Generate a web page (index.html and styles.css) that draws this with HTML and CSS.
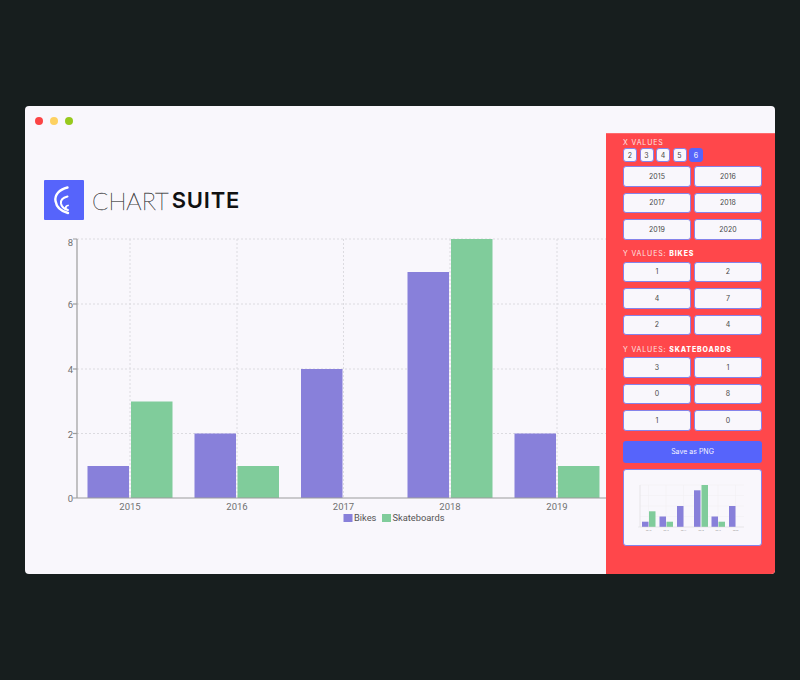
FILE: index.html
```html
<!DOCTYPE html>
<html lang="en">
<head>
    <meta charset="UTF-8">
    <meta name="viewport" content="width=device-width, initial-scale=1.0">
    <title>Chart Suite</title>
    <link rel="stylesheet" href="styles.css">
</head>
<body>
    <div class="window">
        <div class="titlebar">
            <span class="dot dot-red"></span>
            <span class="dot dot-yellow"></span>
            <span class="dot dot-green"></span>
        </div>
        <div class="main">
            <div class="content">
                <div class="logo">
                    <svg class="logo-icon" viewBox="0 0 40 40">
                        <rect width="40" height="40" rx="1" fill="#5664fb"/>
                        <g fill="none" stroke="#fff" stroke-linecap="round">
                            <path stroke-width="2.4" d="M23.5 7.5C15 9.5 10.5 15 11.5 21C12.5 27.5 18 31.5 24 33"/>
                            <path stroke-width="2" d="M23.5 16.500C19 17.500 16.500 20 17 23.500C17.500 26.500 20 29 24 30"/>
                            <path stroke-width="1.800" d="M24 25.500C22 26 21.500 27 22 28"/>
                        </g>
                    </svg>
                    <div class="logo-text"><span class="logo-light">CHART</span><span class="logo-bold">SUITE</span></div>
                </div>
                <svg class="chart" width="581" height="300" viewBox="25 230 581 300">
                    <g class="grid">
                        <line x1="77" y1="239" x2="606" y2="239"/>
                        <line x1="77" y1="304" x2="606" y2="304"/>
                        <line x1="77" y1="369" x2="606" y2="369"/>
                        <line x1="77" y1="433.500" x2="606" y2="433.500"/>
                        <line x1="130" y1="239" x2="130" y2="498"/>
                        <line x1="237" y1="239" x2="237" y2="498"/>
                        <line x1="343.500" y1="239" x2="343.500" y2="498"/>
                        <line x1="450" y1="239" x2="450" y2="498"/>
                        <line x1="557" y1="239" x2="557" y2="498"/>
                    </g>
                    <g class="bars-a">
                        <rect x="87.500" y="466" width="41.500" height="32"/>
                        <rect x="194.500" y="433.500" width="41.500" height="64.500"/>
                        <rect x="301" y="369" width="41.500" height="129"/>
                        <rect x="407.500" y="272" width="41.500" height="226"/>
                        <rect x="514.500" y="433.500" width="41.500" height="64.500"/>
                    </g>
                    <g class="bars-b">
                        <rect x="131" y="401.500" width="41.500" height="96.500"/>
                        <rect x="237.500" y="466" width="41.500" height="32"/>
                        <rect x="451" y="239" width="41.500" height="259"/>
                        <rect x="558" y="466" width="41.500" height="32"/>
                    </g>
                    <g class="axis">
                        <line x1="77" y1="239" x2="77" y2="498"/>
                        <line x1="73" y1="498" x2="606" y2="498"/>
                        <line x1="73" y1="239" x2="77" y2="239"/>
                        <line x1="73" y1="304" x2="77" y2="304"/>
                        <line x1="73" y1="369" x2="77" y2="369"/>
                        <line x1="73" y1="433.500" x2="77" y2="433.500"/>
                    </g>
                    <g class="labels-y">
                        <text x="73" y="245.500">8</text>
                        <text x="73" y="307.500">6</text>
                        <text x="73" y="372.500">4</text>
                        <text x="73" y="437.500">2</text>
                        <text x="73" y="501.500">0</text>
                    </g>
                    <g class="labels-x">
                        <text x="130" y="509.500">2015</text>
                        <text x="237" y="509.500">2016</text>
                        <text x="343.500" y="509.500">2017</text>
                        <text x="450" y="509.500">2018</text>
                        <text x="557" y="509.500">2019</text>
                    </g>
                    <rect class="swatch-a" x="343.500" y="514" width="9" height="8"/>
                    <text class="legend" x="354" y="521">Bikes</text>
                    <rect class="swatch-b" x="382" y="514" width="9" height="8"/>
                    <text class="legend" x="392.500" y="521">Skateboards</text>
                </svg>
            </div>
            <div class="sidebar">
                <div class="label">X VALUES</div>
                <div class="counts">
                    <button class="count">2</button>
                    <button class="count">3</button>
                    <button class="count">4</button>
                    <button class="count">5</button>
                    <button class="count active">6</button>
                </div>
                <div class="values">
                    <button>2015</button><button>2016</button>
                    <button>2017</button><button>2018</button>
                    <button>2019</button><button>2020</button>
                </div>
                <div class="label label-y">Y VALUES: <b>BIKES</b></div>
                <div class="values">
                    <button>1</button><button>2</button>
                    <button>4</button><button>7</button>
                    <button>2</button><button>4</button>
                </div>
                <div class="label label-y">Y VALUES: <b>SKATEBOARDS</b></div>
                <div class="values">
                    <button>3</button><button>1</button>
                    <button>0</button><button>8</button>
                    <button>1</button><button>0</button>
                </div>
                <button class="save">Save as PNG</button>
                <div class="preview">
                    <svg width="137" height="75" viewBox="624 470 137 75">
                        <g class="mini-grid">
                            <line x1="640" y1="485" x2="744" y2="485"/>
                            <line x1="640" y1="495.500" x2="744" y2="495.500"/>
                            <line x1="640" y1="506" x2="744" y2="506"/>
                            <line x1="640" y1="516.500" x2="744" y2="516.500"/>
                            <line x1="640" y1="527" x2="744" y2="527"/>
                            <line x1="640" y1="485" x2="640" y2="527"/>
                            <line x1="648.500" y1="485" x2="648.500" y2="527"/>
                            <line x1="666" y1="485" x2="666" y2="527"/>
                            <line x1="683.500" y1="485" x2="683.500" y2="527"/>
                            <line x1="701" y1="485" x2="701" y2="527"/>
                            <line x1="718" y1="485" x2="718" y2="527"/>
                            <line x1="735.500" y1="485" x2="735.500" y2="527"/>
                        </g>
                        <g class="bars-a">
                            <rect x="642" y="521.700" width="6.500" height="5.300"/>
                            <rect x="659.500" y="516.500" width="6.500" height="10.500"/>
                            <rect x="677" y="506" width="6.500" height="21"/>
                            <rect x="694" y="490.300" width="6.500" height="36.700"/>
                            <rect x="711.500" y="516.500" width="6.500" height="10.500"/>
                            <rect x="729" y="506" width="6.500" height="21"/>
                        </g>
                        <g class="bars-b">
                            <rect x="649" y="511.300" width="6.500" height="15.700"/>
                            <rect x="666.500" y="521.700" width="6.500" height="5.300"/>
                            <rect x="701.500" y="485" width="6.500" height="42"/>
                            <rect x="718.500" y="521.700" width="6.500" height="5.300"/>
                        </g>
                        <g class="mini-axis">
                            <line x1="638" y1="527" x2="744" y2="527"/>
                            <line x1="640" y1="485" x2="640" y2="527"/>
                        </g>
                        <g class="mini-labels">
                            <text x="648.500" y="531">2015</text>
                            <text x="666" y="531">2016</text>
                            <text x="683.500" y="531">2017</text>
                            <text x="701" y="531">2018</text>
                            <text x="718" y="531">2019</text>
                            <text x="735.500" y="531">2020</text>
                        </g>
                    </svg>
                </div>
            </div>
        </div>
    </div>
</body>
</html>
```

FILE: styles.css
```css
body {
    margin: 0;
    background-color: #171e1e;
    font-family: Roboto, sans-serif;
    height: 680px;
    overflow: hidden;
}

.window {
    width: 750px;
    height: 468px;
    margin: 106px 0 0 25px;
    background-color: #f9f7fc;
    border-radius: 4px;
    overflow: hidden;
}

.titlebar {
    height: 27px;
    display: flex;
    align-items: center;
    gap: 7px;
    padding: 3px 0 0 10px;
    box-sizing: border-box;
}

.dot {
    width: 8px;
    height: 8px;
    border-radius: 50%;
}

.dot-red { background-color: #fb4444; }
.dot-yellow { background-color: #fdd161; }
.dot-green { background-color: #97c91d; }

.main {
    display: flex;
    height: 441px;
}

.content {
    flex: 1;
    min-width: 0;
    padding-top: 47px;
}

.logo {
    display: flex;
    align-items: center;
    gap: 8px;
    margin-left: 19px;
    height: 40px;
}

.logo-icon {
    width: 40px;
    height: 40px;
}

.logo-text {
    font-family: Lato, sans-serif;
    font-size: 24px;
    line-height: 1;
    color: #111;
    display: flex;
    gap: 3px;
    padding-top: 1px;
}

.logo-light {
    font-weight: 100;
    color: #000;
    -webkit-text-stroke: 0.3px #444;
}

.logo-bold {
    font-family: Inter, sans-serif;
    font-weight: 600;
    letter-spacing: 0.8px;
    font-size: 22px;
}

.chart {
    display: block;
    margin-top: 10px;
}

.grid line {
    stroke: #dcdbe0;
    stroke-width: 1;
    stroke-dasharray: 2 2;
}

.bars-a rect,
.swatch-a {
    fill: #8880da;
}

.bars-b rect,
.swatch-b {
    fill: #80cc9b;
}

.axis line {
    stroke: #9c9c9c;
    stroke-width: 1.2;
}

.labels-y text,
.labels-x text,
.legend {
    font-family: Roboto, sans-serif;
    font-size: 9.500px;
    fill: #707070;
}

.labels-y text {
    text-anchor: end;
}

.labels-x text {
    text-anchor: middle;
}

.legend {
    font-size: 9.300px;
    fill: #555;
}

.sidebar {
    width: 169px;
    box-sizing: border-box;
    padding: 4px 13px 0 17px;
    background-color: #ff474b;
    border-top: 1px solid #ff6a6c;
}

.label {
    font-family: Inter, sans-serif;
    font-size: 7px;
    line-height: 9px;
    letter-spacing: 0.850px;
    color: #fde3e3;
}

.label b {
    font-weight: 800;
    color: #fff;
}

.label-y {
    margin-top: 9.500px;
    margin-bottom: 3.500px;
}

.counts {
    display: flex;
    gap: 2.500px;
    margin-top: 1px;
    margin-bottom: 4px;
}

button {
    font-family: Inter, sans-serif;
    font-size: 7px;
    color: #484848;
    background-color: #f9f7fc;
    border: 1px solid #8583ea;
    border-radius: 3px;
    padding: 0;
}

.count {
    width: 14px;
    height: 14px;
}

.count.active {
    background-color: #5664fb;
    border-color: #5664fb;
    color: #fff;
}

.values {
    display: grid;
    grid-template-columns: 68px 68px;
    grid-auto-rows: 20.500px;
    column-gap: 3px;
    row-gap: 6px;
}

.save {
    display: block;
    width: 139px;
    height: 22px;
    margin-top: 10px;
    background-color: #5664fb;
    border: none;
    color: #f3f3ff;
}

.preview {
    width: 139px;
    height: 77px;
    box-sizing: border-box;
    margin-top: 6px;
    background-color: #f9f7fc;
    border: 1px solid #8583ea;
    border-radius: 3px;
}

.preview svg {
    display: block;
}

.mini-grid line {
    stroke: #f0eff3;
    stroke-width: 0.500;
}

.mini-axis line {
    stroke: #d8d8dc;
    stroke-width: 0.500;
}

.mini-labels text {
    font-family: Roboto, sans-serif;
    font-size: 2.500px;
    fill: #999;
    text-anchor: middle;
}
```
